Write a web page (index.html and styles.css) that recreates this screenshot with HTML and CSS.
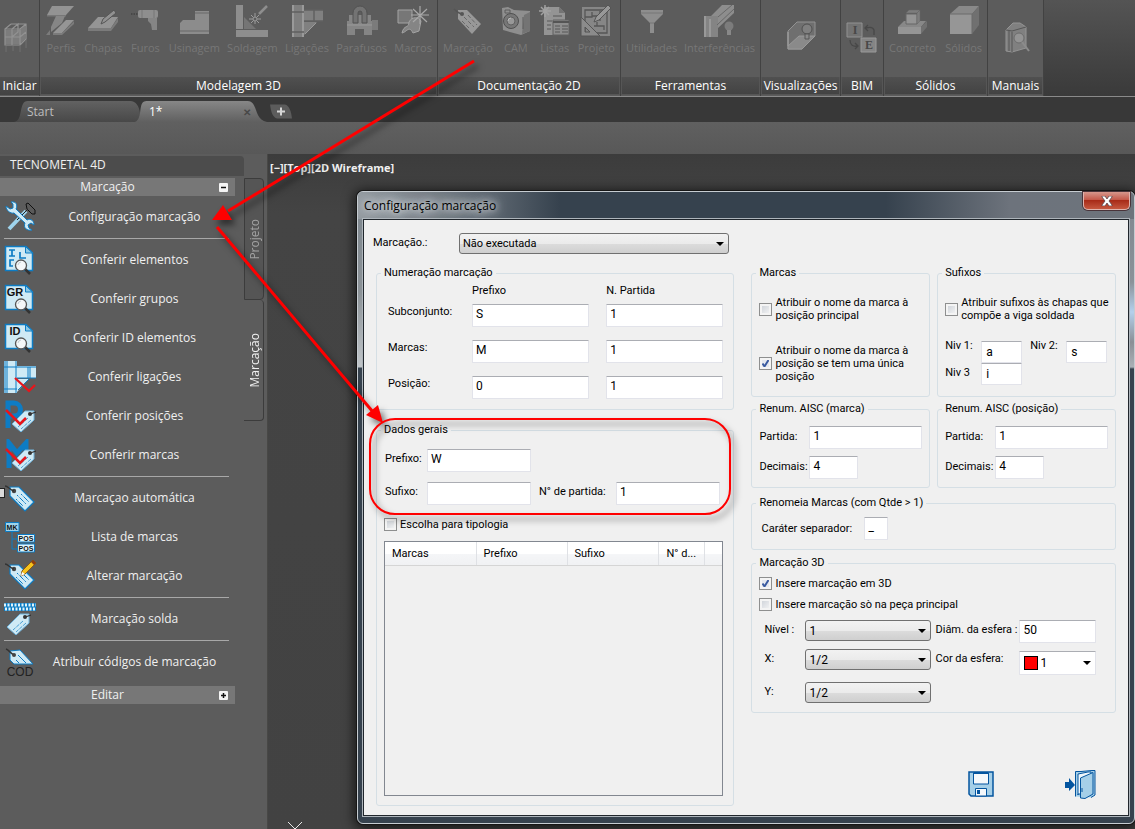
FILE: index.html
```html
<!DOCTYPE html>
<html lang="pt-BR">
<head>
<meta charset="utf-8">
<title>TecnoMETAL 4D - Configuração marcação</title>
<link rel="stylesheet" href="styles.css">
</head>
<body>
<svg class="defs" width="0" height="0" aria-hidden="true">
  <defs>
    <symbol id="tag" viewBox="0 0 32 32">
      <path d="M6 5 15 5 30 20 21 29 6 14Z" fill="#cfeaf5" stroke="#0d7cc4" stroke-width="1.2"/>
      <path d="M13 13 22 22M12 17 19 24M17 12 25 20" stroke="#0d7cc4" stroke-width="1" stroke-dasharray="2 1.500 6 1"/>
      <circle cx="10" cy="9" r="2.200" fill="#444"/>
      <path d="M1 4C4 4 6 8 10 9" fill="none" stroke="#333" stroke-width="1.3"/>
    </symbol>
    <symbol id="sheet" viewBox="0 0 32 32">
      <path d="M1.500 2.500H22L28.500 9V26.500H1.500Z" fill="#cfeaf5" stroke="#0d7cc4" stroke-width="1.5"/>
      <path d="M21.500 2.500V9H28.500Z" fill="#8cc7e4" stroke="#0d7cc4"/>
    </symbol>
    <symbol id="lens" viewBox="0 0 32 32">
      <path d="M21 25 26 30" stroke="#333" stroke-width="2.500"/>
      <circle cx="17" cy="21.500" r="5.500" fill="#f4f7f8" stroke="#555" stroke-width="1.3"/>
      <path d="M14 21A3.500 3.500 0 0 1 17 18" fill="none" stroke="#c3ced4"/>
    </symbol>
    <symbol id="smalltag" viewBox="0 0 32 32">
      <path d="M30 11V20L17 32 8 24 21 11Z" fill="#cfeaf5" stroke="#6fb2da"/>
      <path d="M24 18 14 27M27 20 17 29" stroke="#4aa0d4" stroke-dasharray="4 1"/>
      <circle cx="26" cy="14" r="2" fill="#333"/>
      <path d="M26 14 32 12" stroke="#333" stroke-width="1.300"/>
    </symbol>
    <symbol id="tick" viewBox="0 0 32 32">
      <path d="M2 10 16 24 22 18" fill="none" stroke="#e8151b" stroke-width="2.600"/>
    </symbol>
  </defs>
</svg>

<header class="ribbon">
  <section class="panel panel-start">
    <div class="tools lone">
      <button class="tool" aria-label="Iniciar"><svg viewBox="0 0 32 32"><path d="M4 9H19L24 4V18L19 23H4Z" fill="#7c7c7c"/><g fill="none" stroke="#929292" stroke-width="1.200"><path d="M4 8H19V24H4ZM4 16H19M10 3H25V18L19 24M4 8 10 3M19 8 25 3M19 16 25 11M11 8V24M11 8 17 3V11L11 16"/><path d="M5 25V31M19 25V31M25 19V27M12 25V30" stroke="#6d6d6d"/></g></svg></button>
    </div>
    <h2>Iniciar</h2>
  </section>
  <section class="panel panel-model">
    <div class="tools">
      <button class="tool"><svg viewBox="0 0 32 32"><path d="M7 1H29L21 10H2Z" fill="#939393"/><path d="M2 10H21V11.500H2Z" fill="#777"/><path d="M11 11H20L17 18 6 27V22Z" fill="#868686"/><path d="M21 15H29L17 28H8Z" fill="#959595"/><path d="M1 30 5 25V30ZM8 28H17L29 16V19L17 30H8Z" fill="#7b7b7b"/></svg>Perfis</button>
      <button class="tool"><svg viewBox="0 0 32 32"><path d="M1 23 11 12H31L24 23Z" fill="#959595"/><path d="M1 23H24L31 13V17L24 26H1Z" fill="#7b7b7b"/><path d="M14 19 16 14 27 5 29 8 18 17Z" fill="#919191" stroke="#555"/></svg>Chapas</button>
      <button class="tool"><svg viewBox="0 0 32 32"><rect x="9" y="5" width="20" height="8" rx="2" fill="#8e8e8e"/><path d="M13 5V13M25 5V13" stroke="#777"/><path d="M19 13H28V25H23L22 19 19 16Z" fill="#858585"/><path d="M2 9H9" stroke="#484848" stroke-width="2" stroke-dasharray="1.500 1"/></svg>Furos</button>
      <button class="tool"><svg viewBox="0 0 32 32"><path d="M2 18 5 15H17V6H31V29H2Z" fill="#8c8c8c"/><path d="M17 8H31M2 26H31" stroke="#696969"/></svg>Usinagem</button>
      <button class="tool"><svg viewBox="0 0 32 32"><path d="M0 0H7V24H0ZM0 25H32V32H0Z" fill="#8e8e8e"/><path d="M8 12 20 24H8Z" fill="#757575"/><path d="M23 9 31 1" stroke="#8e8e8e" stroke-width="2.500"/><path d="M19 8V19M13 14H25M15 10 23 18M23 10 15 18" stroke="#9b9b9b"/><circle cx="19" cy="14" r="2" fill="#5c5c5c" stroke="#999"/></svg>Soldagem</button>
      <button class="tool"><svg viewBox="0 0 32 32"><path d="M1 0H13V32H1Z" fill="#7f7f7f"/><path d="M2 0V32M12 0V32" stroke="#9a9a9a" stroke-width="2"/><path d="M13 5H32V16H13ZM13 17H26L13 30Z" fill="#808080"/><path d="M13 5H32M13 16H32M23 5V16M1 7H13M1 27H13" stroke="#606060" stroke-width="1.500"/><path d="M25 18 14 29" stroke="#9a9a9a"/></svg>Ligações</button>
      <button class="tool"><svg viewBox="0 0 32 32"><path d="M1 16H26V24H1ZM1 24H9V30H1ZM18 24H26V30H18ZM3 10H25V16H3Z" fill="#858585"/><path d="M1 20H26M27 15V25M29 15V25M31 15V25" stroke="#9a9a9a"/><path d="M7 18V8A7 7 0 0 1 21 8V18H16V8A2 2 0 0 0 12 8V18Z" fill="#737373" stroke="#525252"/></svg>Parafusos</button>
      <button class="tool"><svg viewBox="0 0 32 32"><path d="M1 5H15V18H1Z" fill="#777" stroke="#a4a4a4"/><path d="M5 28C7 19 12 24 12 17 15 11 22 12 24 16L22 26 16 28C12 20 10 27 5 28Z" fill="#858585" stroke="#a4a4a4"/><path d="M23 1V19M14 10H32M16 4 30 17M30 4 16 17" stroke="#a8a8a8" stroke-width="1.200"/></svg>Macros</button>
    </div>
    <h2>Modelagem 3D</h2>
  </section>
  <section class="panel panel-docs">
    <div class="tools">
      <button class="tool"><svg viewBox="0 0 32 32"><path d="M6 5H15L29 19 20 29 6 14Z" fill="#989898"/><path d="M12 12 22 22M16 10 25 20M10 16 18 24" stroke="#686868" stroke-dasharray="4 2"/><path d="M2 4C5 7 7 9 11 9" fill="none" stroke="#555" stroke-width="1.500"/><circle cx="10" cy="9" r="2" fill="#555"/></svg>Marcação</button>
      <button class="tool"><svg viewBox="0 0 32 32"><path d="M2 3 8 2 14 5 30 6V26L21 30 3 25Z" fill="#8f8f8f"/><path d="M24 10 30 7V26L22 29Z" fill="#747474"/><circle cx="11" cy="16" r="7.500" fill="#777" stroke="#505050"/><circle cx="11" cy="16" r="4" fill="#989898" stroke="#606060"/><path d="M8 16A3 3 0 0 1 11 13" fill="none" stroke="#bbb"/><path d="M5 5H10V8H5ZM23 12V24" fill="none" stroke="#5c5c5c"/></svg>CAM</button>
      <button class="tool"><svg viewBox="0 0 32 32"><path d="M5 2H20L26 8V30H5Z" fill="#949494"/><path d="M20 2V8H26" fill="#747474"/><path d="M14 15H30V30H14Z" fill="#8d8d8d" stroke="#606060"/><path d="M14 17H30" stroke="#555" stroke-width="2"/><path d="M16 21H21M23 21H29M16 24H21M23 24H29M16 27H21M23 27H29M8 16H13M8 20H12M8 24H12M14 11H23" stroke="#575757"/><path d="M6 0V12M0 6H12M2 2 10 10M10 2 2 10" stroke="#a1a1a1" stroke-width="1.500"/></svg>Listas</button>
      <button class="tool"><svg viewBox="0 0 32 32"><path d="M2 2H30V31H2Z" fill="#868686"/><path d="M5 5H27V28H5ZM5 12H12V7M12 11H18M20 6V16M17 21H24V25M14 21H17V17" fill="none" stroke="#565656" stroke-width="1.300"/><path d="M1 12 20 31H1ZM5 22V27H10Z" fill="#8b8b8b" fill-rule="evenodd" stroke="#555"/><path d="M14 17 16 12 28 0 31 3 19 15Z" fill="#989898" stroke="#555"/></svg>Projeto</button>
    </div>
    <h2>Documentação 2D</h2>
  </section>
  <section class="panel panel-utils">
    <div class="tools">
      <button class="tool"><svg viewBox="0 0 32 32"><path d="M5 5H27V9L18 18V28H14V18L5 9Z" fill="#8e8e8e"/><path d="M5 8H27M14 18H18" stroke="#777"/></svg>Utilidades</button>
      <button class="tool"><svg viewBox="0 0 32 32"><path d="M1 11H15V32H1Z" fill="#848484"/><path d="M2 11V32M7 14V32" stroke="#a0a0a0" stroke-width="1.500"/><path d="M8 11 19 0H31V8L15 23V11Z" fill="#8d8d8d"/><path d="M15 12 29 0M14 20 31 4" stroke="#686868"/><circle cx="26" cy="21" r="4.500" fill="#7c7c7c"/><path d="M24 25H28V30H24Z" fill="#888"/></svg>Interferências</button>
    </div>
    <h2>Ferramentas</h2>
  </section>
  <section class="panel panel-views">
    <div class="tools lone">
      <button class="tool" aria-label="Visualizações"><svg viewBox="0 0 32 32"><path d="M3 10 12 1H30V15L17 28H3Z" fill="#6f6f6f" stroke="#929292"/><path d="M3 11V25L14 15H30L17 28H3Z" fill="#8a8a8a" stroke="#999"/><circle cx="22" cy="8" r="5" fill="#7f7f7f" stroke="#505050"/><path d="M20 13H24V18H20Z" fill="#8a8a8a" stroke="#555"/></svg></button>
    </div>
    <h2>Visualizações</h2>
  </section>
  <section class="panel panel-bim">
    <div class="tools lone">
      <button class="tool" aria-label="BIM"><svg viewBox="0 0 32 32"><path d="M1 2H16V16H1Z" fill="#737373" stroke="#929292"/><path d="M15 17H30V31H15Z" fill="#858585" stroke="#999"/><text x="9" y="13" class="glyph">I</text><text x="23" y="28" class="glyph">E</text><path d="M28 14V9C27 6 23 6 20 7M22 4 19 7 22 10M4 19C4 24 7 26 12 25M9 22 12 25 9 28" fill="none" stroke="#484848" stroke-width="1.300"/></svg></button>
    </div>
    <h2>BIM</h2>
  </section>
  <section class="panel panel-solids">
    <div class="tools">
      <button class="tool"><svg viewBox="0 0 32 32"><path d="M2 22 8 16H30L25 22Z" fill="#888"/><path d="M2 22H25V29H2Z" fill="#959595"/><path d="M25 22 31 16V22L25 29Z" fill="#707070"/><path d="M10 9H21V19H10Z" fill="#949494" stroke="#666"/><path d="M10 8 13 5H24L21 8ZM21 8 24 5V16L21 19Z" fill="#7d7d7d" stroke="#666" stroke-width=".5"/></svg>Concreto</button>
      <button class="tool"><svg viewBox="0 0 32 32"><path d="M2 9 11 1H31L24 9Z" fill="#898989"/><path d="M2 9H24V29H2Z" fill="#969696"/><path d="M24 9 31 1V20L24 29Z" fill="#707070"/><path d="M24 9V29M2 9H24" stroke="#6b6b6b"/></svg>Sólidos</button>
    </div>
    <h2>Sólidos</h2>
  </section>
  <section class="panel panel-manuals">
    <div class="tools lone">
      <button class="tool" aria-label="Manuais"><svg viewBox="0 0 32 32"><path d="M6 9 13 2H20L26 6V27L12 31 6 30Z" fill="#808080" stroke="#949494"/><path d="M6 9 12 10 26 6M12 11V31M9 10V30" fill="none" stroke="#555"/><circle cx="19" cy="17" r="5" fill="#949494" stroke="#6c6c6c"/><path d="M22 21 29 30" stroke="#8c8c8c" stroke-width="2"/></svg></button>
    </div>
    <h2>Manuais</h2>
  </section>
</header>

<nav class="filetabs" aria-label="Desenhos">
  <button class="filetab"><svg viewBox="0 0 128 21" preserveAspectRatio="none" aria-hidden="true"><path d="M0 21C10 20 4 0 14 0H118C124 0 127 5 128 12V21Z" fill="url(#tabidle)"/><defs><linearGradient id="tabidle" x2="0" y2="1"><stop stop-color="#626262"/><stop offset="1" stop-color="#484848"/></linearGradient></defs></svg><span>Start</span></button>
  <button class="filetab current"><svg viewBox="0 0 136 22" preserveAspectRatio="none" aria-hidden="true"><path d="M0 22C9 18 2 0 12 0H116C127 0 122 20 136 22Z" fill="url(#tabcur)"/><defs><linearGradient id="tabcur" x2="0" y2="1"><stop stop-color="#878787"/><stop offset="1" stop-color="#606060"/></linearGradient></defs></svg><span>1*</span><b>✕</b></button>
  <button class="newtab" aria-label="Novo desenho"><svg viewBox="0 0 22 14"><path d="M0 0H15C19 1 21 6 22 14H7C3 13 1 8 0 0Z" fill="#5c5c5c"/><path d="M11 3V11M7 7H15" stroke="#d6d6d6" stroke-width="2"/></svg></button>
</nav>

<div class="strip"></div>

<main class="workspace">
  <aside class="palette">
    <div class="palette-body">
      <h1>TECNOMETAL 4D</h1>
      <div class="group-head"><span>Marcação</span><button aria-label="Recolher Marcação"><svg viewBox="0 0 9 9"><path d="M2 4.500H7" stroke="#111" stroke-width="1.500"/></svg></button></div>
      <ul class="commands">
        <li><button><svg viewBox="0 0 32 32"><path d="M22 3 24 2 31 9V13H28L23 8Z" fill="#5a5a5a" stroke="#111"/><path d="M22 10 5 28" stroke="#9ed3ec" stroke-width="4"/><path d="M24 8 13 19" stroke="#222"/><path d="M2 5 6 8 9 7V3L7 1C12 0 14 4 12 8L23 19C27 17 30 20 30 24L27 22 24 24 25 27 28 29C23 30 19 27 21 22L10 12C6 13 2 9 2 5Z" fill="#cfeaf5" stroke="#0d7cc4"/></svg><span>Configuração marcação</span></button></li>
        <li class="rule"></li>
        <li><button><svg viewBox="0 0 32 32"><use href="#sheet"/><path d="M5 6H11M8 6V12M5 12H11M10 16H6V22H9M16 8V14H22" fill="none" stroke="#0d7cc4" stroke-width="1.700"/><use href="#lens"/></svg><span>Conferir elementos</span></button></li>
        <li><button><svg viewBox="0 0 32 32"><use href="#sheet"/><text x="11" y="13" class="mark">GR</text><use href="#lens"/></svg><span>Conferir grupos</span></button></li>
        <li><button><svg viewBox="0 0 32 32"><use href="#sheet"/><text x="11" y="13" class="mark">ID</text><use href="#lens"/></svg><span>Conferir ID elementos</span></button></li>
        <li><button><svg viewBox="0 0 32 32"><path d="M0 0H13V32H0Z" fill="#cfeaf5"/><path d="M13 5H32V17H13ZM13 18H25L13 31Z" fill="#cfeaf5"/><path d="M1 0V32M3 0V32M12 0V32M0 6H13M0 28H13M13 6H32M13 17H32M24 6V17M26 6V17M14 29 25 18" stroke="#0d7cc4"/><path d="M11 17 25 30 31 24" fill="none" stroke="#e8151b" stroke-width="2.300"/></svg><span>Conferir ligações</span></button></li>
        <li><button><svg viewBox="0 0 32 32"><path d="M4 28V3H10A6 6 0 0 1 10 16H4" fill="none" stroke="#0d7cc4" stroke-width="5"/><use href="#smalltag"/><use href="#tick"/></svg><span>Conferir posições</span></button></li>
        <li><button><svg viewBox="0 0 32 32"><path d="M5 29V4L13 14 22 4V20" fill="none" stroke="#0d7cc4" stroke-width="5"/><use href="#smalltag"/><use href="#tick"/></svg><span>Conferir marcas</span></button></li>
        <li class="rule"></li>
        <li><button><svg viewBox="0 0 32 32"><use href="#tag"/></svg><span>Marcaçao automática</span></button></li>
        <li><button><svg viewBox="0 0 32 32"><path d="M8 10V28H14M8 18H14" fill="none" stroke="#0d7cc4"/><path d="M1.500 1.500H15V10.500H1.500Z" fill="#9ed3ec" stroke="#0d7cc4"/><path d="M13.500 13.500H30.500V21H13.500ZM13.500 23H30.500V31H13.500Z" fill="#e0f3fa" stroke="#0d7cc4"/><text x="8" y="9" class="tiny">MK</text><text x="22" y="20" class="tiny">POS</text><text x="22" y="30" class="tiny">POS</text></svg><span>Lista de marcas</span></button></li>
        <li><button><svg viewBox="0 0 32 32"><use href="#tag"/><path d="M17 16 18 11 29 0 32 3 21 14Z" fill="#f6c21c" stroke="#8a5b14"/><path d="M27 2 29 0 32 3 30 5Z" fill="#8c3d15"/><path d="M17 16 18 12 21 14Z" fill="#fff"/></svg><span>Alterar marcação</span></button></li>
        <li class="rule"></li>
        <li><button><svg viewBox="0 0 32 32"><path d="M0 4H32" stroke="#0d7cc4" stroke-width="8"/><path d="M0 2H32M1 6H32" stroke="#e0f3fa" stroke-width="3" stroke-dasharray="2 1.500"/><g transform="translate(-5 0)"><use href="#smalltag" width="32" height="32"/></g></svg><span>Marcação solda</span></button></li>
        <li class="rule"></li>
        <li><button><svg viewBox="0 0 32 32"><path d="M6 5 16 4 29 18H10L6 14Z" fill="#cfeaf5" stroke="#0d7cc4"/><path d="M14 9 22 17M12 14 15 17" stroke="#0d7cc4"/><path d="M2 3C5 4 6 7 10 9" fill="none" stroke="#333" stroke-width="1.500"/><circle cx="10" cy="9" r="2" fill="#444"/><text x="16" y="30" class="code">COD</text></svg><span>Atribuir códigos de marcação</span></button></li>
      </ul>
      <div class="group-head"><span>Editar</span><button aria-label="Expandir Editar"><svg viewBox="0 0 9 9"><path d="M2 4.500H7M4.500 2V7" stroke="#111" stroke-width="1.500"/></svg></button></div>
      <i class="grip"></i>
    </div>
    <div class="sidetabs">
      <button class="sidetab idle"><span>Projeto</span></button>
      <button class="sidetab"><span>Marcação</span></button>
    </div>
  </aside>

  <section class="canvas">
    <p class="viewlabel">[−][Top][2D Wireframe]</p>
    <svg class="cross" viewBox="0 0 14 8" aria-hidden="true"><path d="M0 0 14 14M14 0 0 14" stroke="#e8e8e8"/></svg>

    <div class="dialog" role="dialog" aria-labelledby="dlg-title">
      <div class="titlebar">
        <h2 id="dlg-title">Configuração marcação</h2>
        <button class="close" aria-label="Fechar"><svg viewBox="0 0 12 10"><path d="M1 0H4L6 3 8 0H11V1L8 5 11 9V10H8L6 7 4 10H1V9L4 5 1 1Z" fill="#fff" stroke="#55444a" stroke-width=".8"/></svg></button>
      </div>
      <form class="client">
        <div class="col-left">
          <div class="toprow">
            <label for="status">Marcação.:</label>
            <select id="status"><option>Não executada</option></select>
          </div>
          <fieldset>
            <legend>Numeração marcação</legend>
            <div class="numbering">
              <span></span><span class="colhead">Prefixo</span><span class="colhead">N. Partida</span>
              <label for="sub-p">Subconjunto:</label><input id="sub-p" type="text" value="S"><input type="text" value="1" aria-label="Subconjunto N. Partida">
              <label for="mar-p">Marcas:</label><input id="mar-p" type="text" value="M"><input type="text" value="1" aria-label="Marcas N. Partida">
              <label for="pos-p">Posição:</label><input id="pos-p" type="text" value="0"><input type="text" value="1" aria-label="Posição N. Partida">
            </div>
          </fieldset>
          <fieldset class="general">
            <legend>Dados gerais</legend>
            <div class="general-body">
              <div class="general-grid">
                <label for="g-pre">Prefixo:</label><input id="g-pre" type="text" value="W"><span></span><span></span>
                <label for="g-suf">Sufixo:</label><input id="g-suf" type="text" value=""><label class="indent" for="g-num">N° de partida:</label><input id="g-num" type="text" value="1">
              </div>
              <label class="check"><input type="checkbox"><span>Escolha para tipologia</span></label>
              <div class="listview">
                <table>
                  <colgroup><col class="w-a"><col class="w-a"><col class="w-a"><col class="w-b"><col></colgroup>
                  <thead><tr><th>Marcas</th><th>Prefixo</th><th>Sufixo</th><th>N° d...</th><th></th></tr></thead>
                </table>
              </div>
            </div>
          </fieldset>
        </div>

        <div class="col-right">
          <div class="pair">
            <fieldset>
              <legend>Marcas</legend>
              <div class="marks">
                <label class="check"><input type="checkbox"><span>Atribuir o nome da marca à<br>posição principal</span></label>
                <label class="check"><input type="checkbox" checked><span>Atribuir o nome da marca à<br>posição se tem uma única<br>posição</span></label>
              </div>
            </fieldset>
            <fieldset>
              <legend>Sufixos</legend>
              <div class="marks suffixes">
                <label class="check"><input type="checkbox"><span>Atribuir sufixos às chapas que<br>compõe a viga soldada</span></label>
                <div class="levels">
                  <label for="n1">Niv 1:</label><input id="n1" type="text" value="a"><label class="indent" for="n2">Niv 2:</label><input id="n2" type="text" value="s">
                  <label for="n3">Niv 3</label><input id="n3" type="text" value="i">
                </div>
              </div>
            </fieldset>
          </div>
          <div class="pair renums">
            <fieldset>
              <legend>Renum. AISC (marca)</legend>
              <div class="renum">
                <label for="rm-p">Partida:</label><input id="rm-p" type="text" value="1">
                <label for="rm-d">Decimais:</label><input id="rm-d" class="short" type="text" value="4">
              </div>
            </fieldset>
            <fieldset>
              <legend>Renum. AISC (posição)</legend>
              <div class="renum">
                <label for="rp-p">Partida:</label><input id="rp-p" type="text" value="1">
                <label for="rp-d">Decimais:</label><input id="rp-d" class="short" type="text" value="4">
              </div>
            </fieldset>
          </div>
          <fieldset>
            <legend>Renomeia Marcas (com Qtde &gt; 1)</legend>
            <div class="separator"><label for="sep">Caráter separador:</label><input id="sep" type="text" value="_"></div>
          </fieldset>
          <fieldset>
            <legend>Marcação 3D</legend>
            <div class="mark3d">
              <label class="check"><input type="checkbox" checked><span>Insere marcação em 3D</span></label>
              <label class="check"><input type="checkbox"><span>Insere marcação sò na peça principal</span></label>
              <div class="sphere">
                <label for="lvl">Nível :</label><select id="lvl"><option>1</option></select><label class="near" for="dia">Diâm. da esfera :</label><input id="dia" type="text" value="50">
                <label for="sx">X:</label><select id="sx"><option>1/2</option></select><label class="near" for="cor">Cor da esfera:</label><div class="color"><select id="cor"><option>1</option></select><i></i></div>
                <label for="sy">Y:</label><select id="sy"><option>1/2</option></select>
              </div>
            </div>
          </fieldset>
          <div class="actions">
            <button type="button" aria-label="Salvar"><svg class="save" viewBox="0 0 26 26"><path d="M1 1H25V25H3L1 23Z" fill="#a5cfe8" stroke="#04559f" stroke-width="1.500"/><path d="M5.500 1.500H20.500V13H5.500ZM7.500 17.500H18.500V25H7.500Z" fill="#f5f8fb" stroke="#04559f"/><path d="M9 19H12V23H9Z" fill="#04559f"/><path d="M5 2.500H21" stroke="#04559f"/></svg></button>
            <button type="button" aria-label="Sair"><svg class="exit" viewBox="0 0 32 30"><path d="M1 13H5V9L11 16 5 22V19H1Z" fill="#04559f"/><path d="M11.500 27.500V2.500H17L28 1.500H31V26L27 28.500" fill="#a5cfe8" stroke="#04559f"/><path d="M14 26V5L24 3H27V25H14Z" fill="#eef6fb" stroke="#04559f"/><path d="M16.500 29V9L29 3.500V25L21 29.500Z" fill="#a5cfe8" stroke="#04559f"/><path d="M18 19V23" stroke="#04559f"/></svg></button>
          </div>
        </div>
      </form>
    </div>
  </section>
</main>

<svg class="callouts" viewBox="0 0 1135 829" aria-hidden="true">
  <path d="M474 61 228 211" stroke="#f00" stroke-width="3"/>
  <path d="M212 220 223 205 232 220Z" fill="#f00"/>
  <path d="M217 227 373 412" stroke="#f00" stroke-width="3"/>
  <path d="M383 423 366 415 378 405Z" fill="#f00"/>
  <rect x="370" y="419" width="360" height="95" rx="25" fill="none" stroke="#f00" stroke-width="2"/>
</svg>
</body>
</html>
```
FILE: styles.css
```css
* { box-sizing: border-box; }

body {
  margin: 0;
  min-height: 100vh;
  position: relative;
  display: flex;
  flex-direction: column;
  overflow: hidden;
  background: #5c5c5c;
  color: #f0f0f0;
  font: 12px/16px "Open Sans", "Noto Sans", sans-serif;
}

h1, h2, p, ul { margin: 0; padding: 0; font-size: 12px; font-weight: 400; list-style: none; }
button { margin: 0; padding: 0; border: 0; background: none; color: inherit; font: inherit; }
svg { display: block; }
.defs { position: absolute; }

/* ribbon */
.ribbon {
  display: flex;
  height: 97px;
  background: linear-gradient(#545454, #3a3a3a);
  border-bottom: 1px solid #8a8a8a;
}
.panel { display: flex; flex-direction: column; flex: none; padding-bottom: 1px; background: #5c5c5c; border-right: 1px solid #424242; }
.panel-start { width: 40px; }
.panel-model { width: 398px; }
.panel-docs { width: 183px; }
.panel-utils { width: 140px; }
.panel-views { width: 80px; }
.panel-bim { width: 43px; }
.panel-solids { width: 104px; }
.panel-manuals { width: 56px; }
.tools { flex: 1; display: flex; justify-content: space-between; padding: 5px 5px 0; }
.lone { justify-content: center; padding: 21px 0 0; }
.panel-start .lone { padding-right: 6px; }
.tool { display: flex; flex-direction: column; align-items: center; justify-content: flex-start; gap: 3px; color: #777; font-size: 11px; }
.tool svg { width: 32px; height: 32px; }
.panel h2 {
  height: 18px;
  line-height: 18px;
  text-align: center;
  color: #fff;
  background: linear-gradient(#505050, #434343);
  border: 1px solid #565656;
  border-top: 0;
  white-space: nowrap;
}
.panel-start h2 { border: 0; }
.glyph { font: bold 12px "Liberation Serif", serif; text-anchor: middle; fill: #484848; }

/* drawing tabs */
.filetabs { display: flex; align-items: flex-end; height: 25px; padding-left: 14px; background: #383838; }
.filetab { position: relative; display: flex; align-items: center; width: 126px; height: 21px; padding-left: 13px; color: #bdbdbd; text-align: left; }
.filetab svg { position: absolute; inset: 0; width: 100%; height: 100%; }
.filetab span { position: relative; flex: 1; }
.filetab b { position: relative; width: 24px; color: #484848; font-size: 10px; }
.filetab.current { width: 132px; margin-left: -5px; padding-left: 14px; color: #fff; }
.newtab { align-self: center; margin: 4px 0 0 3px; }
.newtab svg { width: 22px; height: 15px; }
.strip { height: 32px; background: linear-gradient(#606060, #585858); }

/* workspace */
.workspace { flex: 1; display: flex; }
.palette { display: flex; width: 267px; padding-top: 2px; background: #5c5c5c; }
.palette-body { position: relative; width: 244px; }
.palette h1 {
  height: 20px;
  margin-bottom: 2px;
  padding-left: 10px;
  line-height: 18px;
  background: #4c4c4c;
  border-radius: 0 4px 0 0;
}
.group-head { display: flex; align-items: center; width: 235px; height: 18px; padding-right: 7px; background: #777; }
.group-head span { flex: 1; padding-right: 4px; text-align: center; }
.group-head button { width: 9px; height: 9px; background: #f4f4f4; border-radius: 1px; }
.commands { width: 235px; padding: 1px 6px 5px 4px; }
.commands button { display: flex; align-items: center; gap: 4px; width: 100%; height: 39px; }
.commands svg { width: 32px; height: 32px; flex: none; }
.commands span { flex: 1; text-align: center; white-space: nowrap; }
.rule { height: 4px; padding-top: 2px; }
.rule::before { content: ""; display: block; border-top: 1px solid #a8a8a8; }
.mark { font: bold 11px "Liberation Sans", sans-serif; text-anchor: middle; fill: #111; }
.tiny { font: bold 7px "Liberation Sans", sans-serif; text-anchor: middle; fill: #111; }
.code { font: 12px "Liberation Sans", sans-serif; text-anchor: middle; fill: #222; }
.grip { position: absolute; left: -2px; top: 332px; width: 7px; height: 10px; background: #dadada; border: 1px solid #222; }
.sidetabs { width: 20px; padding-top: 22px; }
.sidetab { display: flex; align-items: center; justify-content: center; width: 20px; height: 121px; padding-left: 2px; border: 1px solid #3c3c3c; border-left: 0; border-top: 0; border-radius: 0 4px 4px 0; }
.sidetab.idle { height: 122px; color: #a3a3a3; background: #555; border: 1px solid #3c3c3c; }
.sidetab span { writing-mode: vertical-rl; transform: rotate(180deg); }

.canvas { position: relative; flex: 1; background: linear-gradient(#3c3c3c, #444 60px, #424242); border-left: 1px solid #484846; }
.viewlabel { padding: 6px 2px; font: bold 11px/16px "Open Sans", "Noto Sans", sans-serif; }
.cross { position: absolute; left: 20px; bottom: -1px; width: 14px; height: 8px; }

/* dialog window */
.dialog {
  position: absolute;
  inset: 37px 0 5px 89px;
  display: flex;
  flex-direction: column;
  padding: 0 5px 7px;
  color: #000;
  font: 11px/13px Roboto, "Liberation Sans", sans-serif;
  background: linear-gradient(#7c858d, #8b9297 100px, #c0c5c9 175px, #36424e 176px) left / 8px 100% no-repeat, linear-gradient(#7f868e, #8a9299 90px, #b4d0ec 120px, #8a8f96 150px, #aab0b6 175px, #36424e 177px) right / 8px 100% no-repeat, #36424e;
  border: 1px solid #c6ccd1;
  border-radius: 6px;
  box-shadow: 0 0 0 1px #161616, 0 2px 12px 3px rgba(0, 0, 0, .65);
}
.titlebar {
  display: flex;
  justify-content: space-between;
  align-items: center;
  height: 27px;
  margin: 0 -5px;
  padding: 0 4px 0 6px;
  border-radius: 5px 5px 0 0;
  background: linear-gradient(90deg, #949ba1, #59636d 18%, #36424e 26%, #36424e 68%, #6d737c 84%, #6d747c);
}
.titlebar h2 { font: 12px/16px "Open Sans", "Noto Sans", sans-serif; text-shadow: 0 0 6px #dfe3e6, 0 0 10px #dfe3e6, 0 0 14px #dfe3e6; }
.close {
  align-self: flex-start;
  display: flex;
  align-items: center;
  justify-content: center;
  width: 47px;
  height: 18px;
  border: 1px solid #e0b4ae;
  border-top: 0;
  border-radius: 0 0 5px 5px;
  background: linear-gradient(#d6978c, #c4594a 45%, #a82b18 50%, #c5573f);
  box-shadow: 0 0 0 1px #49343a;
}
.close svg { width: 12px; height: 10px; }
.client {
  flex: 1;
  display: grid;
  grid-template-columns: 358fr 364fr;
  column-gap: 17px;
  padding: 13px 12px 9px;
  background: #f0f0f0;
  border: 1px solid #20262c;
  box-shadow: 0 0 0 1px #aeb5bb;
}

/* form controls */
input[type="text"] {
  width: 100%;
  min-width: 0;
  height: 23px;
  padding: 0 3px 3px;
  border: 1px solid #e2e3ea;
  border-top-color: #abadb3;
  border-radius: 1px;
  background: #fff;
  color: #000;
  font: 12px/16px Roboto, "Liberation Sans", sans-serif;
}
select {
  appearance: none;
  width: 100%;
  height: 21px;
  padding: 0 18px 0 3px;
  border: 1px solid #707070;
  border-radius: 3px;
  color: #000;
  font: 12px/16px Roboto, "Liberation Sans", sans-serif;
  background:
    url("data:image/svg+xml,%3Csvg xmlns='http://www.w3.org/2000/svg' width='8' height='4'%3E%3Cpath d='M0 0H8L4 4Z'/%3E%3C/svg%3E") right 4px center no-repeat,
    linear-gradient(#f2f2f2, #ebebeb 50%, #dcdcdc 51%, #cfcfcf);
}
#status { font-size: 11px; }
input[type="checkbox"] {
  appearance: none;
  flex: none;
  width: 13px;
  height: 13px;
  margin: 0;
  border: 1px solid #8e8f8f;
  background: linear-gradient(135deg, #c9ced5, #f8f8f8);
  box-shadow: inset 0 0 0 2px #f4f4f4;
}
input[type="checkbox"]:checked {
  background: url("data:image/svg+xml,%3Csvg xmlns='http://www.w3.org/2000/svg' width='11' height='11'%3E%3Cpath d='M2.500 5.500 4.500 8.500 8.500 2' fill='none' stroke='%23395aa0' stroke-width='2'/%3E%3C/svg%3E") center no-repeat, #e4e8ef;
}
.check { display: flex; align-items: center; gap: 3px; white-space: nowrap; }
label { white-space: nowrap; }
fieldset { min-width: 0; margin: 0; padding: 0; border: 1px solid #d5dfe5; border-radius: 3px; }
legend { margin-left: 4px; padding: 0 3px; line-height: 14px; }
.indent { padding-left: 8px; }

.col-left { display: flex; flex-direction: column; }
.toprow { display: grid; grid-template-columns: 86px 270px; margin-left: -3px; margin-bottom: 12px; line-height: 20px; }
.numbering { display: grid; grid-template-columns: 67px 1fr 1fr; column-gap: 17px; row-gap: 13px; padding: 4px 10px 10px 11px; line-height: 16px; }
.colhead { height: 14px; margin-bottom: -7px; line-height: 14px; }
.general { flex: 1; display: flex; flex-direction: column; margin-top: 13px; }
.general-body { flex: 1; display: flex; flex-direction: column; padding: 12px 10px 9px 7px; }
.general-grid { display: grid; grid-template-columns: 42px 104px 85px 104px; row-gap: 10px; padding-left: 1px; line-height: 20px; }
.general .check { margin: 13px 0 10px; }
.listview { flex: 1; border: 1px solid #828790; }
table { width: 100%; border-collapse: collapse; table-layout: fixed; }
th { height: 23px; padding: 0 7px; font-weight: 400; text-align: left; background: linear-gradient(#fff 50%, #f5f6f8 51%, #f0f1f3); border-right: 1px solid #dfe1e5; border-bottom: 1px solid #d5d5d5; }
th:last-child { border-right: 0; }
.w-a { width: 91px; }
.w-b { width: 46px; }
th:nth-child(4) { padding-right: 0; padding-left: 8px; }

.col-right { display: flex; flex-direction: column; padding-top: 33px; }
.pair { display: grid; grid-template-columns: 1fr 1fr; gap: 7px; margin-bottom: 5px; }
.renums { margin-bottom: 8px; }
.marks { display: flex; flex-direction: column; gap: 22px; padding: 16px 7px 11px; }
.suffixes { gap: 19px; }
.levels { display: grid; grid-template-columns: 36px 41px 44px 41px; line-height: 10px; }
.levels input { height: 22px; padding: 0 4px; }
.levels label { height: 22px; }
.levels label[for="n3"] { line-height: 20px; }
.renum { display: grid; grid-template-columns: 50px 1fr; row-gap: 7px; padding: 10px 7px 8px; line-height: 22px; }
.renum .short { width: 49px; }
.separator { display: grid; grid-template-columns: 103px 24px; padding: 7px 9px 8px; line-height: 24px; }
.col-right > fieldset + fieldset { margin-top: 6px; }
.mark3d { padding: 7px 7px 9px; }
.mark3d .check + .check { margin-top: 8px; }
.sphere { display: grid; grid-template-columns: 41px 126px 88px 77px; grid-template-rows: 29px 33px 21px; padding: 9px 0 0 5px; line-height: 20px; }
.near { padding-left: 4px; }
.color { position: relative; padding-top: 2px; }
.color select { height: 24px; padding-left: 20px; border: 1px solid #e2e3ea; border-top-color: #abadb3; background-color: #fff; background-image: url("data:image/svg+xml,%3Csvg xmlns='http://www.w3.org/2000/svg' width='8' height='4'%3E%3Cpath d='M0 0H8L4 4Z'/%3E%3C/svg%3E"); border-radius: 1px; }
.color i { position: absolute; left: 5px; top: 7px; width: 14px; height: 14px; background: #f00; border: 1px solid #000; }
.actions { display: flex; justify-content: flex-end; align-items: center; gap: 70px; margin-top: 56px; padding-right: 20px; }
.save { width: 26px; height: 26px; }
.exit { width: 32px; height: 30px; }

/* red callouts over the screen */
.callouts { position: absolute; left: 0; top: 0; width: 1135px; height: 829px; pointer-events: none; fill: none; filter: drop-shadow(4px 5px 3px rgba(0, 0, 0, .5)); }
```
